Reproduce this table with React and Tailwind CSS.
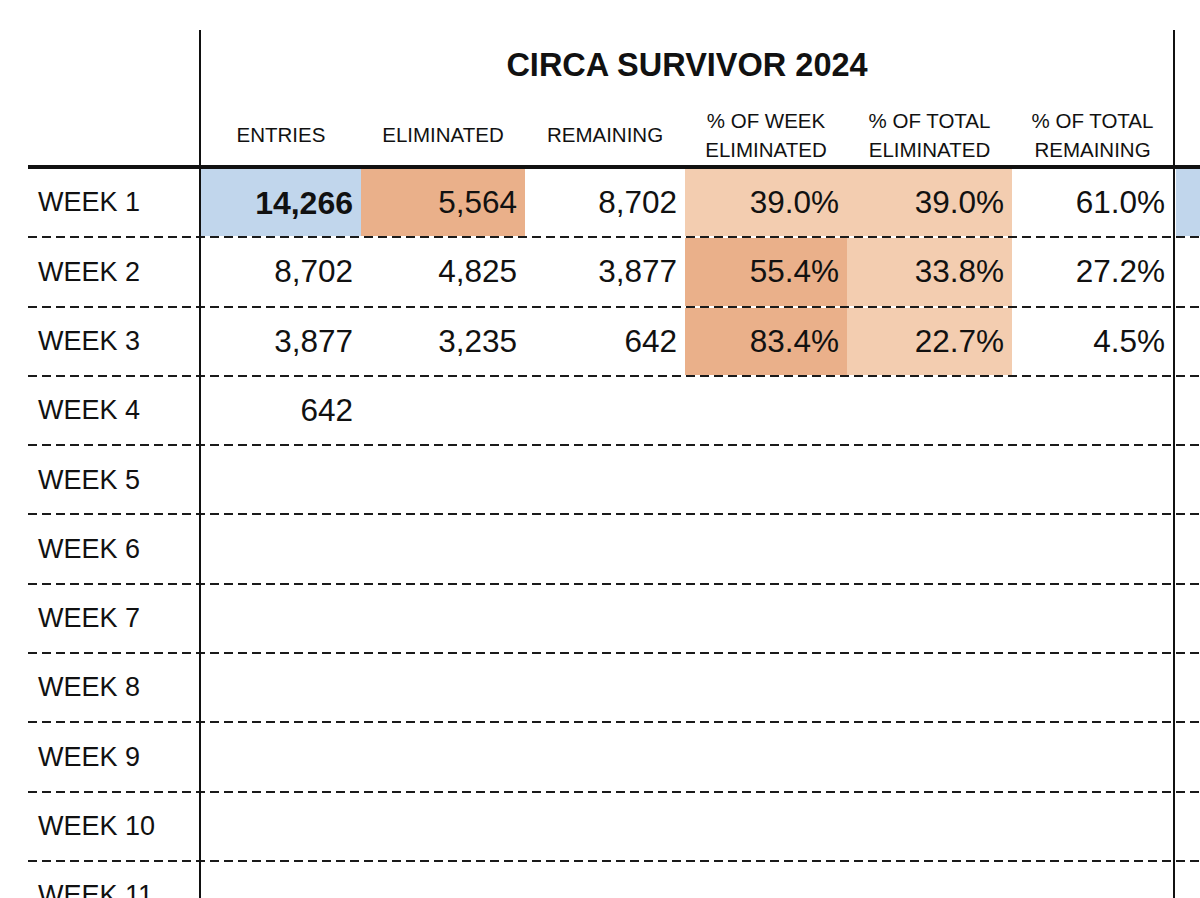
import React from "react";

const COLS = ["w-[160px]", "w-[164px]", "w-[160px]", "w-[162px]", "w-[165px]", "w-[161px]"];

const HEADERS = [
  ["ENTRIES"],
  ["ELIMINATED"],
  ["REMAINING"],
  ["% OF WEEK", "ELIMINATED"],
  ["% OF TOTAL", "ELIMINATED"],
  ["% OF TOTAL", "REMAINING"],
];

const BLUE = "bg-[#c1d6ec]";
const ORANGE = "bg-[#eab08a]";
const PEACH = "bg-[#f3cdb0]";

const ROWS = [
  {
    label: "WEEK 1",
    cells: [
      { v: "14,266", bg: BLUE, bold: true },
      { v: "5,564", bg: ORANGE },
      { v: "8,702" },
      { v: "39.0%", bg: PEACH },
      { v: "39.0%", bg: PEACH },
      { v: "61.0%" },
    ],
    tail: BLUE,
  },
  {
    label: "WEEK 2",
    cells: [
      { v: "8,702" },
      { v: "4,825" },
      { v: "3,877" },
      { v: "55.4%", bg: ORANGE },
      { v: "33.8%", bg: PEACH },
      { v: "27.2%" },
    ],
  },
  {
    label: "WEEK 3",
    cells: [
      { v: "3,877" },
      { v: "3,235" },
      { v: "642" },
      { v: "83.4%", bg: ORANGE },
      { v: "22.7%", bg: PEACH },
      { v: "4.5%" },
    ],
  },
  { label: "WEEK 4", cells: [{ v: "642" }] },
  { label: "WEEK 5", cells: [] },
  { label: "WEEK 6", cells: [] },
  { label: "WEEK 7", cells: [] },
  { label: "WEEK 8", cells: [] },
  { label: "WEEK 9", cells: [] },
  { label: "WEEK 10", cells: [] },
  { label: "WEEK 11", cells: [] },
];

const Row = ({ row }) => (
  <div className="flex h-[69.3px] shrink-0 bg-[repeating-linear-gradient(90deg,#1a1a1a_0_9px,transparent_9px_14px)] bg-[length:100%_2px] bg-bottom bg-no-repeat">
    <div className="flex w-[171px] items-center pb-[2px] pl-[10px] text-[27px] text-[#111]">
      {row.label}
    </div>
    <div className="flex border-x-2 border-[#111] pb-[2px]">
      {COLS.map((w, i) => {
        const cell = row.cells[i];
        return (
          <div
            key={i}
            className={`flex items-center justify-end pr-[8px] ${w} ${cell && cell.bg ? cell.bg : ""}`}
          >
            {cell && (
              <span className={cell.bold ? "text-[32px] font-bold text-[#111]" : "text-[31.5px] text-[#111]"}>
                {cell.v}
              </span>
            )}
          </div>
        );
      })}
    </div>
    <div className="flex-1 pb-[2px] pl-px">
      <div className={`h-full ${row.tail || ""}`} />
    </div>
  </div>
);

const App = () => {
  return (
    <div className="h-[898px] w-[1200px] overflow-hidden bg-white pl-[28px] pt-[30px] font-['Liberation_Sans',Arial,sans-serif] text-[#111]">
      <div className="flex">
        <div className="w-[171px]" />
        <div className="flex flex-col border-x-2 border-[#111]">
          <div className="flex h-[70px] items-center justify-center text-[32.5px] font-bold">
            CIRCA SURVIVOR 2024
          </div>
          <div className="flex h-[65px]">
            {HEADERS.map((lines, i) => (
              <div
                key={i}
                className={`flex flex-col items-center justify-center pt-[4px] text-[20.5px] leading-[29px] ${COLS[i]}`}
              >
                {lines.map((l) => (
                  <span key={l}>{l}</span>
                ))}
              </div>
            ))}
          </div>
        </div>
      </div>
      <div className="h-[4px] bg-[#111]" />
      <div className="flex flex-col">
        {ROWS.map((row) => (
          <Row key={row.label} row={row} />
        ))}
      </div>
    </div>
  );
};

export default App;
